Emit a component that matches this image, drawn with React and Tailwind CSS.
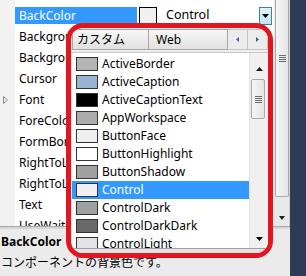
import React from "react";

const props = [
  "BackColor",
  "BackgroundImage",
  "BackgroundImageLayout",
  "Cursor",
  "Font",
  "ForeColor",
  "FormBorderStyle",
  "RightToLeft",
  "RightToLeftLayout",
  "Text",
  "UseWaitCursor",
];

const colors = [
  ["ActiveBorder", "#b4b4b4"],
  ["ActiveCaption", "#99b4d1"],
  ["ActiveCaptionText", "#000000"],
  ["AppWorkspace", "#ababab"],
  ["ButtonFace", "#f0f0f0"],
  ["ButtonHighlight", "#ffffff"],
  ["ButtonShadow", "#a0a0a0"],
  ["Control", "#f0f0f0"],
  ["ControlDark", "#a0a0a0"],
  ["ControlDarkDark", "#696969"],
  ["ControlLight", "#e3e3e3"],
];

function Down({ className = "" }) {
  return (
    <svg width="7" height="4" viewBox="0 0 7 4" className={className}>
      <polygon points="0,0 7,0 3.5,4" fill="#000" />
    </svg>
  );
}

export default function App() {
  return (
    <div className="relative flex h-[276px] w-[306px] overflow-hidden bg-white font-['Noto_Sans','Noto_Sans_CJK_JP',sans-serif] text-[12px] text-black">
      <div className="flex w-[290px] flex-col">
        {/* property grid */}
        <div className="flex h-[226px] overflow-hidden">
          {/* margin column */}
          <div className="flex w-[15px] flex-col bg-[#f2f2f2] pt-[5px]">
            {props.map((p) => (
              <div key={p} className="flex h-[21px] shrink-0 items-center pl-[3px]">
                {p === "Font" && (
                  <svg width="5" height="8" viewBox="0 0 5 8">
                    <polygon points="0.5,0.5 4.5,4 0.5,7.5" fill="none" stroke="#909090" strokeWidth="1" />
                  </svg>
                )}
              </div>
            ))}
          </div>
          {/* rows */}
          <div className="flex w-[259px] flex-col pt-[5px]">
            {props.map((p, i) => (
              <div key={p} className="flex h-[21px] shrink-0">
                <div className="w-[122px] overflow-hidden whitespace-nowrap">
                  {i === 0 ? (
                    <div className="mt-[2px] h-[17px] bg-[#3399ff] pl-[4px] leading-[17px] text-white">{p}</div>
                  ) : (
                    <div className="pl-[4px] leading-[21px]">{p}</div>
                  )}
                </div>
                <div className="flex flex-1 items-center bg-white">
                  {i === 0 && (
                    <>
                      <div className="ml-[2px] h-[17px] w-[18px] border border-black bg-[#f0f0f0]" />
                      <span className="ml-[9px] flex-1 text-[12.5px]">Control</span>
                      <div className="mr-[2px] flex h-[18px] w-[13px] items-center justify-center border border-[#3c7fb1] bg-gradient-to-b from-[#e5f4fc] to-[#c4e5f6]">
                        <Down />
                      </div>
                    </>
                  )}
                </div>
              </div>
            ))}
          </div>
          {/* grid scrollbar */}
          <div className="flex w-[16px] flex-col border-r border-[#cfcfcf] bg-[#e9e9e9]">
            <div className="ml-[1px] flex h-[197px] w-[14px] flex-col items-center gap-[1px] rounded-b-[2px] border border-t-0 border-[#a9a9a9] bg-gradient-to-r from-[#f6f6f6] to-[#e4e4e4] pt-[55px]">
              <div className="h-px w-[7px] bg-[#6a6a6a]" />
              <div className="h-px w-[7px] bg-[#6a6a6a]" />
              <div className="h-px w-[7px] bg-[#6a6a6a]" />
              <div className="h-px w-[7px] bg-[#6a6a6a]" />
            </div>
            <div className="flex-1" />
            <div className="flex h-[17px] items-center justify-center">
              <svg width="6" height="4" viewBox="0 0 6 4">
                <polygon points="0,0 6,0 3,4" fill="#202020" />
              </svg>
            </div>
          </div>
        </div>
        <div className="h-px bg-[#a8a8a8]" />
        <div className="h-[2px] bg-[#d6d6d6]" />
        {/* description */}
        <div className="flex flex-1 flex-col bg-[#ebebeb] pl-[1px] pt-[4px]">
          <div className="h-[17px] font-bold leading-[17px]">BackColor</div>
          <div className="mt-[4px] whitespace-nowrap leading-[17px]">コンポーネントの背景色です。</div>
        </div>
      </div>
      <div className="w-[16px] bg-[#2d3b57]" />

      {/* dropdown popup with red annotation frame */}
      <div className="absolute left-[66px] top-[23px] flex h-[235px] w-[207px] flex-col overflow-hidden rounded-[17px] border-[5px] border-[#e3161f] bg-[#eeeeee]">
        {/* tabs */}
        <div className="ml-[1px] mt-[1px] flex h-[21px] shrink-0">
          <div className="flex w-[77px] items-center border border-[#a8a8a8] bg-gradient-to-b from-[#f7f7f7] to-[#e1e1e1] pl-[4px]">
            カスタム
          </div>
          <div className="flex w-[79px] items-center border border-l-0 border-[#a8a8a8] bg-gradient-to-b from-[#f7f7f7] to-[#e1e1e1] pl-[7px]">
            Web
          </div>
          <div className="flex w-[20px] items-center justify-center border border-l-0 border-[#c4c4c4] bg-[#ececec]">
            <svg width="3" height="5" viewBox="0 0 3 5">
              <polygon points="3,0 3,5 0,2.5" fill="#4d5e85" />
            </svg>
          </div>
          <div className="flex w-[20px] items-center justify-center border border-l-0 border-[#c4c4c4] bg-[#ececec]">
            <svg width="3" height="5" viewBox="0 0 3 5">
              <polygon points="0,0 0,5 3,2.5" fill="#4d5e85" />
            </svg>
          </div>
        </div>
        <div className="mt-[2px] h-px shrink-0 bg-[#c8c8c8]" />
        {/* list */}
        <div className="ml-[1px] flex h-[195px] shrink-0 bg-white">
          <div className="flex flex-1 flex-col overflow-hidden pt-[2px]">
            {colors.map(([name, c]) => {
              const sel = name === "Control";
              return (
                <div
                  key={name}
                  className={`flex h-[18px] shrink-0 items-center ${sel ? "bg-[#3399ff] text-white" : ""}`}
                >
                  <div className="ml-[4px] h-[14px] w-[22px] border border-[#333333]" style={{ backgroundColor: c }} />
                  <span className="ml-[4px] whitespace-nowrap">{name}</span>
                </div>
              );
            })}
          </div>
          {/* popup scrollbar */}
          <div className="flex w-[19px] flex-col border-l border-[#e2e2e2] bg-[#f0f0f0] pt-[7px]">
            <div className="flex h-[18px] items-center justify-center">
              <svg width="7" height="4" viewBox="0 0 7 4">
                <polygon points="0,4 7,4 3.5,0" fill="#1a1a1a" />
              </svg>
            </div>
            <div className="ml-[1px] mt-[1px] flex h-[40px] w-[14px] flex-col items-center justify-center gap-[1px] rounded-[2px] border border-[#a9a9a9] bg-gradient-to-r from-[#f7f7f7] to-[#e3e3e3]">
              <div className="h-px w-[7px] bg-[#6a6a6a]" />
              <div className="h-px w-[7px] bg-[#6a6a6a]" />
              <div className="h-px w-[7px] bg-[#6a6a6a]" />
              <div className="h-px w-[7px] bg-[#6a6a6a]" />
            </div>
            <div className="flex-1" />
            <div className="flex h-[18px] items-center justify-center">
              <Down />
            </div>
          </div>
        </div>
        <div className="h-px shrink-0 bg-[#a0a0a0]" />
        <div className="flex-1 bg-[#e4e4e4]" />
      </div>
    </div>
  );
}
